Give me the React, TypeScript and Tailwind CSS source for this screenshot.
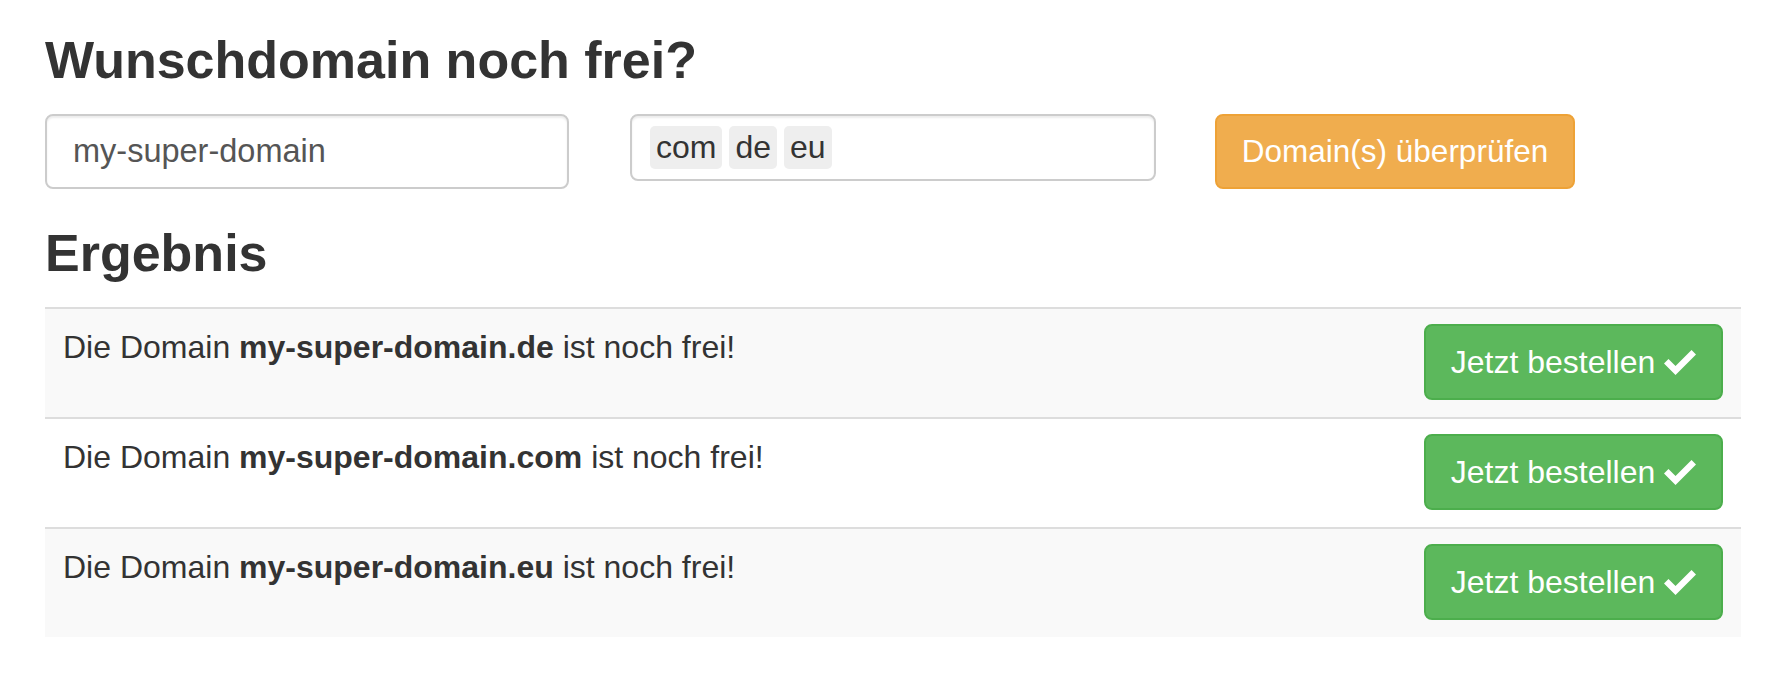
import { useState } from 'react';

const tlds = ['com', 'de', 'eu'];

const results = [
  { domain: 'my-super-domain.de' },
  { domain: 'my-super-domain.com' },
  { domain: 'my-super-domain.eu' },
];

function CheckIcon() {
  return (
    <svg viewBox="0 0 100 82" className="w-[32px] h-[27px]" fill="currentColor">
      <polygon points="0,44 14,30 36,52 86,2 100,16 36,80" />
    </svg>
  );
}

export default function App() {
  const [name, setName] = useState('my-super-domain');

  return (
    <div className="px-[45px] pt-[31px] font-['Liberation_Sans',Arial,sans-serif] text-[#333]">
      <h3 className="text-[52px] leading-[58px] font-bold">Wunschdomain noch frei?</h3>

      <div className="mt-[25px] flex items-start">
        <input
          value={name}
          onChange={(e) => setName(e.target.value)}
          className="w-[524px] h-[75px] px-[26px] border-2 border-[#ccc] rounded-[8px] text-[32.5px] text-[#555] shadow-[inset_0_2px_2px_rgba(0,0,0,0.075)] outline-none"
        />

        <div className="ml-[61px] w-[526px] h-[67px] border-2 border-[#ccc] rounded-[8px] shadow-[inset_0_2px_2px_rgba(0,0,0,0.075)] flex items-start gap-[7px] pl-[18px] pt-[10px]">
          {tlds.map((t) => (
            <span key={t} className="h-[43px] px-[6px] rounded-[5px] bg-[#eee] text-[32px] leading-[43px] text-[#333]">
              {t}
            </span>
          ))}
        </div>

        <button className="ml-[59px] w-[360px] h-[75px] rounded-[8px] border-2 border-[#eea236] bg-[#f0ad4e] text-white text-[31.5px]">
          Domain(s) überprüfen
        </button>
      </div>

      <h3 className="mt-[35px] text-[52px] leading-[58px] font-bold">Ergebnis</h3>

      <div className="mt-[25px]">
        {results.map((r, i) => (
          <div
            key={r.domain}
            className={`flex justify-between items-start border-t-2 border-[#ddd] px-[18px] pt-[15px] pb-[17px] ${
              i % 2 === 0 ? 'bg-[#f9f9f9]' : 'bg-white'
            }`}
          >
            <div className="text-[32px] leading-[44px] pt-[1px]">
              Die Domain <strong className="font-bold">{r.domain}</strong> ist noch frei!
            </div>
            <button className="w-[299px] h-[76px] rounded-[8px] border-2 border-[#4cae4c] bg-[#5cb85c] text-white text-[32px] flex items-center justify-center gap-[9px]">
              Jetzt bestellen
              <CheckIcon />
            </button>
          </div>
        ))}
      </div>
    </div>
  );
}
